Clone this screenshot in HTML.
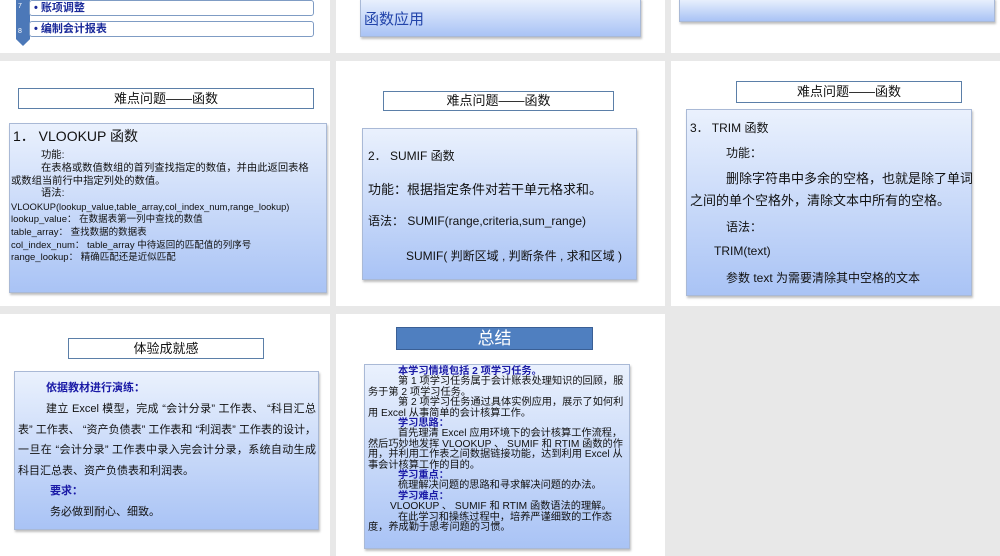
<!DOCTYPE html><html><head><meta charset="utf-8"><style>
body{margin:0;width:1000px;height:556px;background:#e8e8e8;position:relative;overflow:hidden;font-family:"Liberation Sans","Noto Sans CJK SC",sans-serif;color:#111}
.p{position:absolute;background:#fff;overflow:hidden}
.a{position:absolute}
.g{position:absolute;background:linear-gradient(#eaf1fd,#a9c3f5);border:1px solid #a9b9d6;box-shadow:1px 2px 2px rgba(0,0,0,.25);box-sizing:border-box}
.t{position:absolute;border:1px solid #5b7fa8;background:#fff;text-align:center;box-sizing:border-box;font-size:13px}
.l{position:absolute;white-space:nowrap}
.b{color:#1a1aa6;font-weight:bold}
</style></head><body>
<div class="p" style="left:0;top:0;width:330px;height:53px">
 <div class="a" style="left:16px;top:0;width:14px;height:46px;background:#4c78b8;clip-path:polygon(0 0,100% 0,100% 85%,50% 100%,0 85%)"></div>
 <div class="a" style="left:18px;top:3px;font-size:7px;color:#fff">7</div>
 <div class="a" style="left:18px;top:28px;font-size:7px;color:#fff">8</div>
 <div class="a" style="left:29px;top:0;width:285px;height:16px;border:1px solid #7f9cc4;border-radius:3px;box-sizing:border-box;font-size:11px;font-weight:bold;color:#1a2a9a;line-height:14px;padding-left:4px;background:#fff">• 账项调整</div>
 <div class="a" style="left:29px;top:21px;width:285px;height:16px;border:1px solid #7f9cc4;border-radius:3px;box-sizing:border-box;font-size:11px;font-weight:bold;color:#1a2a9a;line-height:14px;padding-left:4px;background:#fff">• 编制会计报表</div>
</div>
<div class="p" style="left:336px;top:0;width:329px;height:53px">
 <div class="g" style="left:24px;top:-2px;width:281px;height:39px"></div>
 <div class="l" style="left:28px;top:8px;font-size:15px;color:#2244aa">函数应用</div>
</div>
<div class="p" style="left:671px;top:0;width:329px;height:53px">
 <div class="g" style="left:8px;top:-2px;width:316px;height:24px"></div>
</div>

<div class="p" style="left:0;top:61px;width:330px;height:245px">
 <div class="t" style="left:18px;top:27px;width:296px;height:21px;line-height:19px">难点问题——函数</div>
 <div class="g" style="left:9px;top:62px;width:318px;height:170px"></div>
 <div class="l" style="left:13px;top:65px;font-size:14px">1．  VLOOKUP 函数</div>
 <div class="a" style="left:11px;top:89px;width:305px;font-size:10.3px;line-height:12.8px">
 <div style="padding-left:30px">功能:</div>
 <div style="text-indent:30px">在表格或数值数组的首列查找指定的数值，并由此返回表格或数组当前行中指定列处的数值。</div>
 <div style="padding-left:30px">语法:</div>
 <div style="font-size:9.3px">VLOOKUP(lookup_value,table_array,col_index_num,range_lookup)</div>
 <div style="font-size:9.5px">lookup_value： 在数据表第一列中查找的数值</div>
 <div style="font-size:9.5px">table_array： 查找数据的数据表</div>
 <div style="font-size:9.5px">col_index_num：  table_array 中待返回的匹配值的列序号</div>
 <div style="font-size:9.5px">range_lookup： 精确匹配还是近似匹配</div>
 </div>
</div>
<div class="p" style="left:336px;top:61px;width:329px;height:245px">
 <div class="t" style="left:47px;top:30px;width:231px;height:20px;line-height:18px">难点问题——函数</div>
 <div class="g" style="left:26px;top:67px;width:275px;height:152px"></div>
 <div class="l" style="left:32px;top:86px;font-size:12px">2．  SUMIF 函数</div>
 <div class="l" style="left:32px;top:118px;font-size:13px">功能：根据指定条件对若干单元格求和。</div>
 <div class="l" style="left:32px;top:151px;font-size:12px">语法：  SUMIF(range,criteria,sum_range)</div>
 <div class="l" style="left:70px;top:186px;font-size:12px">SUMIF( 判断区域 , 判断条件 , 求和区域 )</div>
</div>
<div class="p" style="left:671px;top:61px;width:329px;height:245px">
 <div class="t" style="left:65px;top:20px;width:226px;height:22px;line-height:20px">难点问题——函数</div>
 <div class="g" style="left:15px;top:48px;width:286px;height:187px"></div>
 <div class="l" style="left:19px;top:58px;font-size:12px">3．  TRIM 函数</div>
 <div class="l" style="left:55px;top:83px;font-size:12px">功能：</div>
 <div class="l" style="left:55px;top:107px;font-size:13px">删除字符串中多余的空格，也就是除了单词</div>
 <div class="l" style="left:19px;top:129px;font-size:13px">之间的单个空格外，清除文本中所有的空格。</div>
 <div class="l" style="left:55px;top:157px;font-size:12px">语法：</div>
 <div class="l" style="left:43px;top:183px;font-size:12px">TRIM(text)</div>
 <div class="l" style="left:55px;top:208px;font-size:12px">参数 text 为需要清除其中空格的文本</div>
</div>

<div class="p" style="left:0;top:314px;width:330px;height:242px">
 <div class="t" style="left:68px;top:24px;width:196px;height:21px;line-height:19px">体验成就感</div>
 <div class="g" style="left:14px;top:57px;width:305px;height:159px"></div>
 <div class="a" style="left:18px;top:64px;width:298px;font-size:11px;line-height:21px">
 <div class="b" style="padding-left:28px">依据教材进行演练：</div>
 <div style="text-indent:28px;text-align:justify;line-height:20.5px">建立 Excel 模型，完成 “会计分录” 工作表、 “科目汇总表” 工作表、 “资产负债表” 工作表和 “利润表” 工作表的设计，一旦在 “会计分录” 工作表中录入完会计分录，系统自动生成科目汇总表、资产负债表和利润表。</div>
 <div class="b" style="padding-left:32px">要求：</div>
 <div style="padding-left:32px">务必做到耐心、细致。</div>
 </div>
</div>
<div class="p" style="left:336px;top:314px;width:329px;height:242px">
 <div class="a" style="left:60px;top:13px;width:197px;height:23px;background:#4f7fc0;border:1px solid #3a5f95;box-sizing:border-box;color:#fff;font-size:17px;text-align:center;line-height:21px">总结</div>
 <div class="g" style="left:28px;top:50px;width:266px;height:185px"></div>
 <div class="a" style="left:32px;top:53px;width:258px;font-size:10.2px;line-height:10.4px">
 <div class="b" style="padding-left:30px">本学习情境包括 2 项学习任务。</div>
 <div style="text-indent:30px">第 1 项学习任务属于会计账表处理知识的回顾，服务于第 2 项学习任务。</div>
 <div style="text-indent:30px">第 2 项学习任务通过具体实例应用，展示了如何利用 Excel 从事简单的会计核算工作。</div>
 <div class="b" style="padding-left:30px">学习思路：</div>
 <div style="text-indent:30px">首先理清 Excel 应用环境下的会计核算工作流程，然后巧妙地发挥 VLOOKUP 、 SUMIF 和 RTIM 函数的作用，并利用工作表之间数据链接功能，达到利用 Excel 从事会计核算工作的目的。</div>
 <div class="b" style="padding-left:30px">学习重点：</div>
 <div style="padding-left:30px">梳理解决问题的思路和寻求解决问题的办法。</div>
 <div class="b" style="padding-left:30px">学习难点：</div>
 <div style="padding-left:22px">VLOOKUP 、 SUMIF 和 RTIM 函数语法的理解。</div>
 <div style="text-indent:30px">在此学习和操练过程中，培养严谨细致的工作态度，养成勤于思考问题的习惯。</div>
 </div>
</div>
</body></html>
